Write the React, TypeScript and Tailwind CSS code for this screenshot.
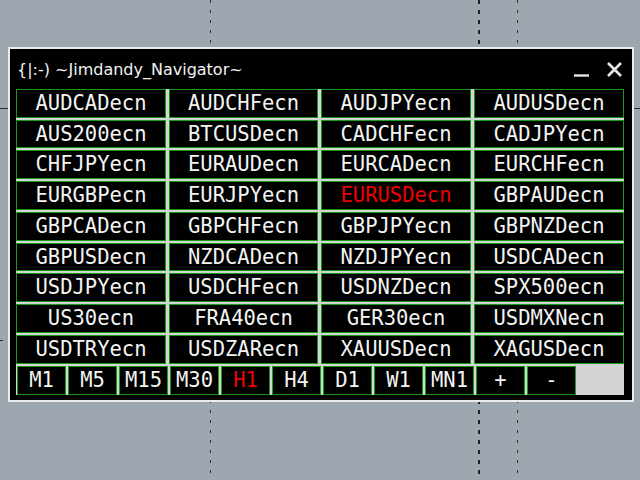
import React from "react";

const symbols = [
  "AUDCADecn", "AUDCHFecn", "AUDJPYecn", "AUDUSDecn",
  "AUS200ecn", "BTCUSDecn", "CADCHFecn", "CADJPYecn",
  "CHFJPYecn", "EURAUDecn", "EURCADecn", "EURCHFecn",
  "EURGBPecn", "EURJPYecn", "EURUSDecn", "GBPAUDecn",
  "GBPCADecn", "GBPCHFecn", "GBPJPYecn", "GBPNZDecn",
  "GBPUSDecn", "NZDCADecn", "NZDJPYecn", "USDCADecn",
  "USDJPYecn", "USDCHFecn", "USDNZDecn", "SPX500ecn",
  "US30ecn", "FRA40ecn", "GER30ecn", "USDMXNecn",
  "USDTRYecn", "USDZARecn", "XAUUSDecn", "XAGUSDecn",
];

const timeframes = ["M1", "M5", "M15", "M30", "H1", "H4", "D1", "W1", "MN1", "+", "-"];

const activeSymbol = "EURUSDecn";
const activeFrame = "H1";

const mono = { fontFamily: '"DejaVu Sans Mono", "Liberation Mono", monospace' };

function ChartGrid() {
  // dotted period separators and price levels of the chart behind the panel
  return (
    <svg className="absolute inset-0" width={640} height={480}>
      <line x1={210.5} y1={0} x2={210.5} y2={480} stroke="#2a2f33" strokeWidth={1} strokeDasharray="3 7" />
      <line x1={479} y1={0} x2={479} y2={480} stroke="#1f2326" strokeWidth={2} strokeDasharray="4 6" />
      <line x1={517.5} y1={0} x2={517.5} y2={480} stroke="#2a2f33" strokeWidth={1} strokeDasharray="3 7" />
      <line x1={0} y1={108.5} x2={640} y2={108.5} stroke="#2a2f33" strokeWidth={1} />
      <line x1={0} y1={340.5} x2={640} y2={340.5} stroke="#2a2f33" strokeWidth={1} strokeDasharray="3 7" />
    </svg>
  );
}

export default function App() {
  return (
    <div className="relative w-[640px] h-[480px] overflow-hidden bg-[#9ea7af]">
      <ChartGrid />
      <div className="relative ml-[8px] mt-[47px] w-[626px] h-[355px] border-2 border-[#ececec] bg-black flex flex-col pl-[6px] pr-[6px] pb-[4px]">
        <div className="h-[40px] flex items-center justify-between shrink-0">
          <span
            className="pl-[1px] pt-[2px] text-[#f2f2f2] text-[16px]"
            style={{ fontFamily: '"DejaVu Sans", "Noto Sans", sans-serif' }}
          >
            {"{|:-) ~Jimdandy_Navigator~"}
          </span>
          <svg width={52} height={20} viewBox="0 0 52 20" className="mr-[2px] mt-[2px]">
            <line x1={2} y1={15.5} x2={17} y2={15.5} stroke="#e6e6e6" strokeWidth={2.4} />
            <line x1={36} y1={3} x2={49} y2={16} stroke="#e6e6e6" strokeWidth={2.6} />
            <line x1={49} y1={3} x2={36} y2={16} stroke="#e6e6e6" strokeWidth={2.6} />
          </svg>
        </div>
        <div
          className="grid grid-cols-[150px_149px_150px_150px] grid-rows-[29px_28px_29px_29px_29px_28px_29px_29px_29px_29px] gap-x-[3px] gap-y-[2px] bg-[#d4d4d4] h-[306px] w-[608px]"
          style={mono}
        >
          {symbols.map((s) => (
            <div
              key={s}
              className={
                "bg-black border border-[#179a17] flex items-center justify-center text-[20.5px] leading-none " +
                (s === activeSymbol ? "text-[#f00000]" : "text-[#f4f4f4]")
              }
            >
              {s}
            </div>
          ))}
          <div className="col-span-4 flex gap-[2px] pl-[1px]">
            {timeframes.map((t) => (
              <div
                key={t}
                className={
                  "w-[49px] bg-black border border-[#179a17] flex items-center justify-center text-[20.5px] leading-none " +
                  (t === activeFrame ? "text-[#f00000]" : "text-[#f4f4f4]")
                }
              >
                {t}
              </div>
            ))}
          </div>
        </div>
      </div>
    </div>
  );
}
